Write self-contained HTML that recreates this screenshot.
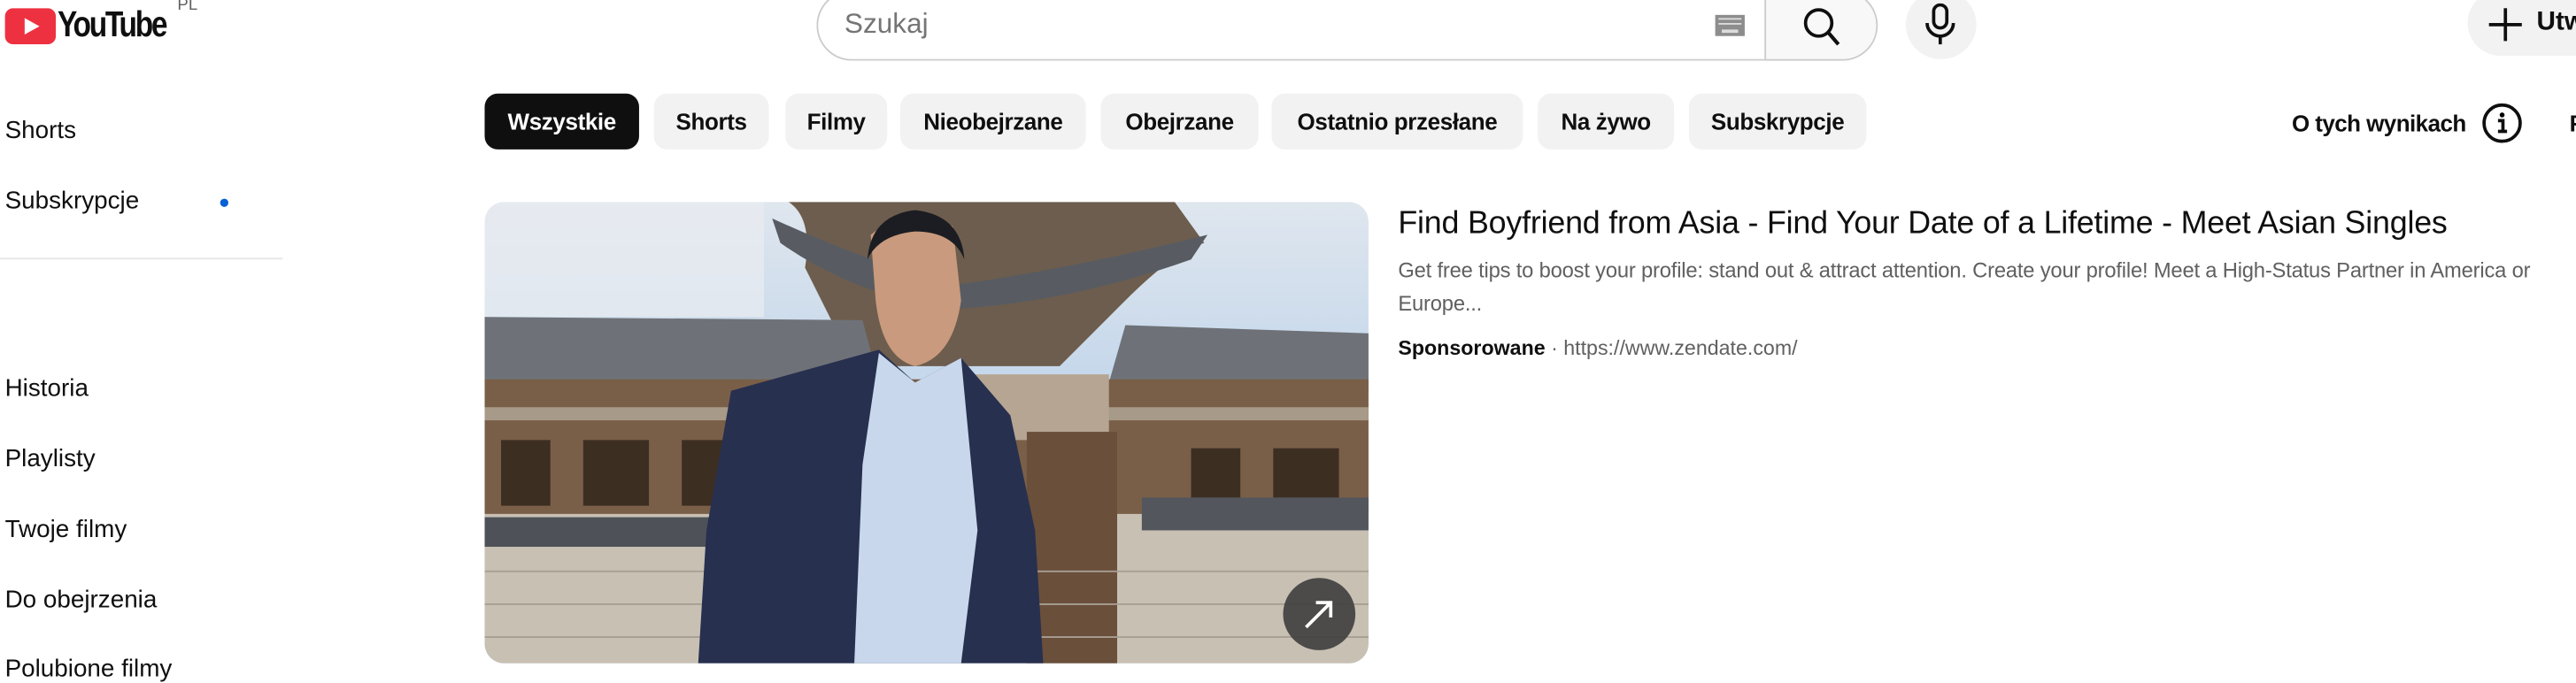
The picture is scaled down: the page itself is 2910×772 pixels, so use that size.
<!DOCTYPE html>
<html><head><meta charset="utf-8"><style>
html,body{margin:0;padding:0;background:#fff;overflow:hidden;width:2910px;height:768px}
#w{position:absolute;left:0;top:0;width:1568px;height:414px;transform:scale(1.8559);transform-origin:0 0;font-family:"Liberation Sans",Arial,sans-serif;color:#0f0f0f}
.a{position:absolute;white-space:nowrap}
.side{font-size:15px;left:3px}
.chip{position:absolute;top:57px;height:34px;border-radius:8px;background:#f2f2f2;font-size:14px;font-weight:bold;line-height:34px;text-align:center;letter-spacing:-0.2px}
</style></head><body><div id="w">
<!-- logo -->
<svg class="a" style="left:3px;top:5px" width="31" height="22" viewBox="0 0 31 22"><rect width="31" height="22" rx="5" fill="#ee3140"/><path d="M12 6 L21 11 L12 16Z" fill="#fff"/></svg>
<div class="a" style="left:35px;top:2px;font-size:22px;letter-spacing:-1.5px;transform:scaleX(0.82);transform-origin:0 0;font-weight:bold">YouTube</div>
<div class="a" style="left:108px;top:-2px;font-size:10px;color:#606060">PL</div>
<!-- search -->
<div class="a" style="left:497px;top:-6px;width:577px;height:41px;border:1px solid #ccc;border-right:none;border-radius:22px 0 0 22px"></div>
<div class="a" style="left:514px;top:5px;font-size:17px;color:#757575">Szukaj</div>
<svg class="a" style="left:1044px;top:9px" width="18" height="13"><rect width="18" height="13" fill="#8d8d8d"/><g fill="#ddd"><rect x="2" y="2" width="14" height="1"/><rect x="2" y="5" width="14" height="1"/><rect x="4" y="9" width="10" height="2"/></g></svg>
<div class="a" style="left:1074px;top:-6px;width:67px;height:41px;border:1px solid #ccc;border-radius:0 22px 22px 0;background:#f8f8f8"></div>
<svg class="a" style="left:1096px;top:3px" width="26" height="26" viewBox="0 0 26 26"><circle cx="11" cy="11" r="8" fill="none" stroke="#0f0f0f" stroke-width="2"/><path d="M17 17 L23 24" stroke="#0f0f0f" stroke-width="2.2"/></svg>
<div class="a" style="left:1160px;top:-6px;width:43px;height:42px;border-radius:50%;background:#f2f2f2"></div>
<svg class="a" style="left:1170px;top:2px" width="22" height="26" viewBox="0 0 22 26"><rect x="7" y="1" width="8" height="14" rx="4" fill="none" stroke="#0f0f0f" stroke-width="2"/><path d="M3 12 a8 8 0 0 0 16 0 M11 20 V25" fill="none" stroke="#0f0f0f" stroke-width="2"/></svg>
<div class="a" style="left:1502px;top:-6px;width:90px;height:40px;border-radius:20px;background:#f2f2f2"></div>
<svg class="a" style="left:1514px;top:4px" width="22" height="22"><path d="M11 1V21M1 11H21" stroke="#0f0f0f" stroke-width="2"/></svg>
<div class="a" style="left:1544px;top:5px;font-size:16px;font-weight:bold">Utwórz</div>
<!-- sidebar -->
<div class="a side" style="top:71px">Shorts</div>
<div class="a side" style="top:114px">Subskrypcje</div>
<div class="a" style="left:134px;top:121px;width:5px;height:5px;border-radius:50%;background:#065fd4"></div>
<div class="a" style="left:0;top:157px;width:172px;height:1px;background:#e5e5e5"></div>
<div class="a side" style="top:228px">Historia</div>
<div class="a side" style="top:271px">Playlisty</div>
<div class="a side" style="top:314px">Twoje filmy</div>
<div class="a side" style="top:357px">Do obejrzenia</div>
<div class="a side" style="top:399px">Polubione filmy</div>
<!-- chips -->
<div class="chip" style="left:295px;width:94px;background:#0f0f0f;color:#fff">Wszystkie</div>
<div class="chip" style="left:398px;width:70px">Shorts</div>
<div class="chip" style="left:478px;width:62px">Filmy</div>
<div class="chip" style="left:548px;width:113px">Nieobejrzane</div>
<div class="chip" style="left:670px;width:96px">Obejrzane</div>
<div class="chip" style="left:774px;width:153px">Ostatnio przesłane</div>
<div class="chip" style="left:936px;width:83px">Na żywo</div>
<div class="chip" style="left:1028px;width:108px">Subskrypcje</div>
<div class="a" style="left:1395px;top:67px;font-size:14px;font-weight:bold;letter-spacing:-0.3px">O tych wynikach</div>
<svg class="a" style="left:1510px;top:62px" width="26" height="26"><circle cx="13" cy="13" r="11" fill="none" stroke="#0f0f0f" stroke-width="2"/><circle cx="13" cy="8" r="1.5"/><path d="M10.5 11.5H13.5V18M10.5 18H16" stroke="#0f0f0f" stroke-width="2" fill="none"/></svg>
<div class="a" style="left:1564px;top:67px;font-size:14px;font-weight:bold">Filtry</div>
<!-- thumbnail -->
<svg class="a" style="left:295px;top:123px;border-radius:12px" width="538" height="281" viewBox="0 0 538 281">
<defs><linearGradient id="sky" x1="0" y1="0" x2="0" y2="1"><stop offset="0" stop-color="#dfe6ee"/><stop offset="1" stop-color="#9cc0e6"/></linearGradient></defs>
<rect width="538" height="281" fill="url(#sky)"/>
<rect x="0" y="0" width="170" height="70" fill="#e9edf1" opacity=".7"/>
<path d="M185 0 Q200 10 195 40 L225 100 L350 100 L390 60 Q420 30 438 25 L420 0 Z" fill="#6d5d4e"/>
<path d="M175 10 Q240 40 290 50 Q360 40 440 20 L430 35 Q360 60 290 65 Q230 60 180 25Z" fill="#585c62"/>
<path d="M0 70 L230 72 L240 110 L0 110Z" fill="#6e7278"/>
<path d="M390 75 L538 80 L538 115 L380 110Z" fill="#6e7278"/>
<rect x="0" y="108" width="538" height="85" fill="#7a5f48"/>
<rect x="0" y="125" width="538" height="8" fill="#a89a88"/>
<g fill="#3d2e22"><rect x="10" y="145" width="30" height="40"/><rect x="60" y="145" width="40" height="40"/><rect x="120" y="145" width="35" height="40"/><rect x="430" y="150" width="30" height="38"/><rect x="480" y="150" width="40" height="38"/></g>
<rect x="290" y="105" width="90" height="40" fill="#b5a592"/>
<rect x="0" y="190" width="538" height="91" fill="#c8c0b3"/>
<rect x="0" y="192" width="170" height="18" fill="#4e5258"/>
<rect x="400" y="180" width="138" height="20" fill="#53575d"/>
<rect x="330" y="140" width="55" height="141" fill="#6a4f3a"/>
<g stroke="#a79f93" stroke-width="1"><path d="M0 225H538M0 245H538M0 265H538"/></g>
<path d="M235 20 Q260 0 285 15 L290 60 Q285 95 262 100 Q242 95 238 60Z" fill="#c99a7d"/>
<path d="M233 35 Q235 8 262 5 Q290 8 292 35 Q285 18 262 18 Q240 20 233 35Z" fill="#1c1d22"/>
<path d="M150 115 L240 90 L262 110 L290 95 L320 130 L335 200 L340 281 L130 281 L135 200Z" fill="#27304f"/>
<path d="M240 92 L262 110 L290 95 L300 200 L290 281 L225 281 L230 160Z" fill="#c9d7ec"/>
<circle cx="508" cy="251" r="22" fill="#3e3e3e" opacity=".9"/>
<path d="M500 259 L515 244 M506 244 H515 V253" stroke="#fff" stroke-width="2" fill="none"/>
</svg>
<!-- text -->
<div class="a" style="left:851px;top:126px;font-size:19.3px;letter-spacing:-0.1px">Find Boyfriend from Asia - Find Your Date of a Lifetime - Meet Asian Singles</div>
<div class="a" style="left:851px;top:155px;width:716px;white-space:normal;font-size:12.8px;line-height:20px;color:#606060;letter-spacing:-0.1px">Get free tips to boost your profile: stand out &amp; attract attention. Create your profile! Meet a High-Status Partner in America or Europe...</div>
<div class="a" style="left:851px;top:205px;font-size:12.5px;color:#606060"><b style="color:#0f0f0f">Sponsorowane</b> · https://www.zendate.com/</div>
</div></body></html>
